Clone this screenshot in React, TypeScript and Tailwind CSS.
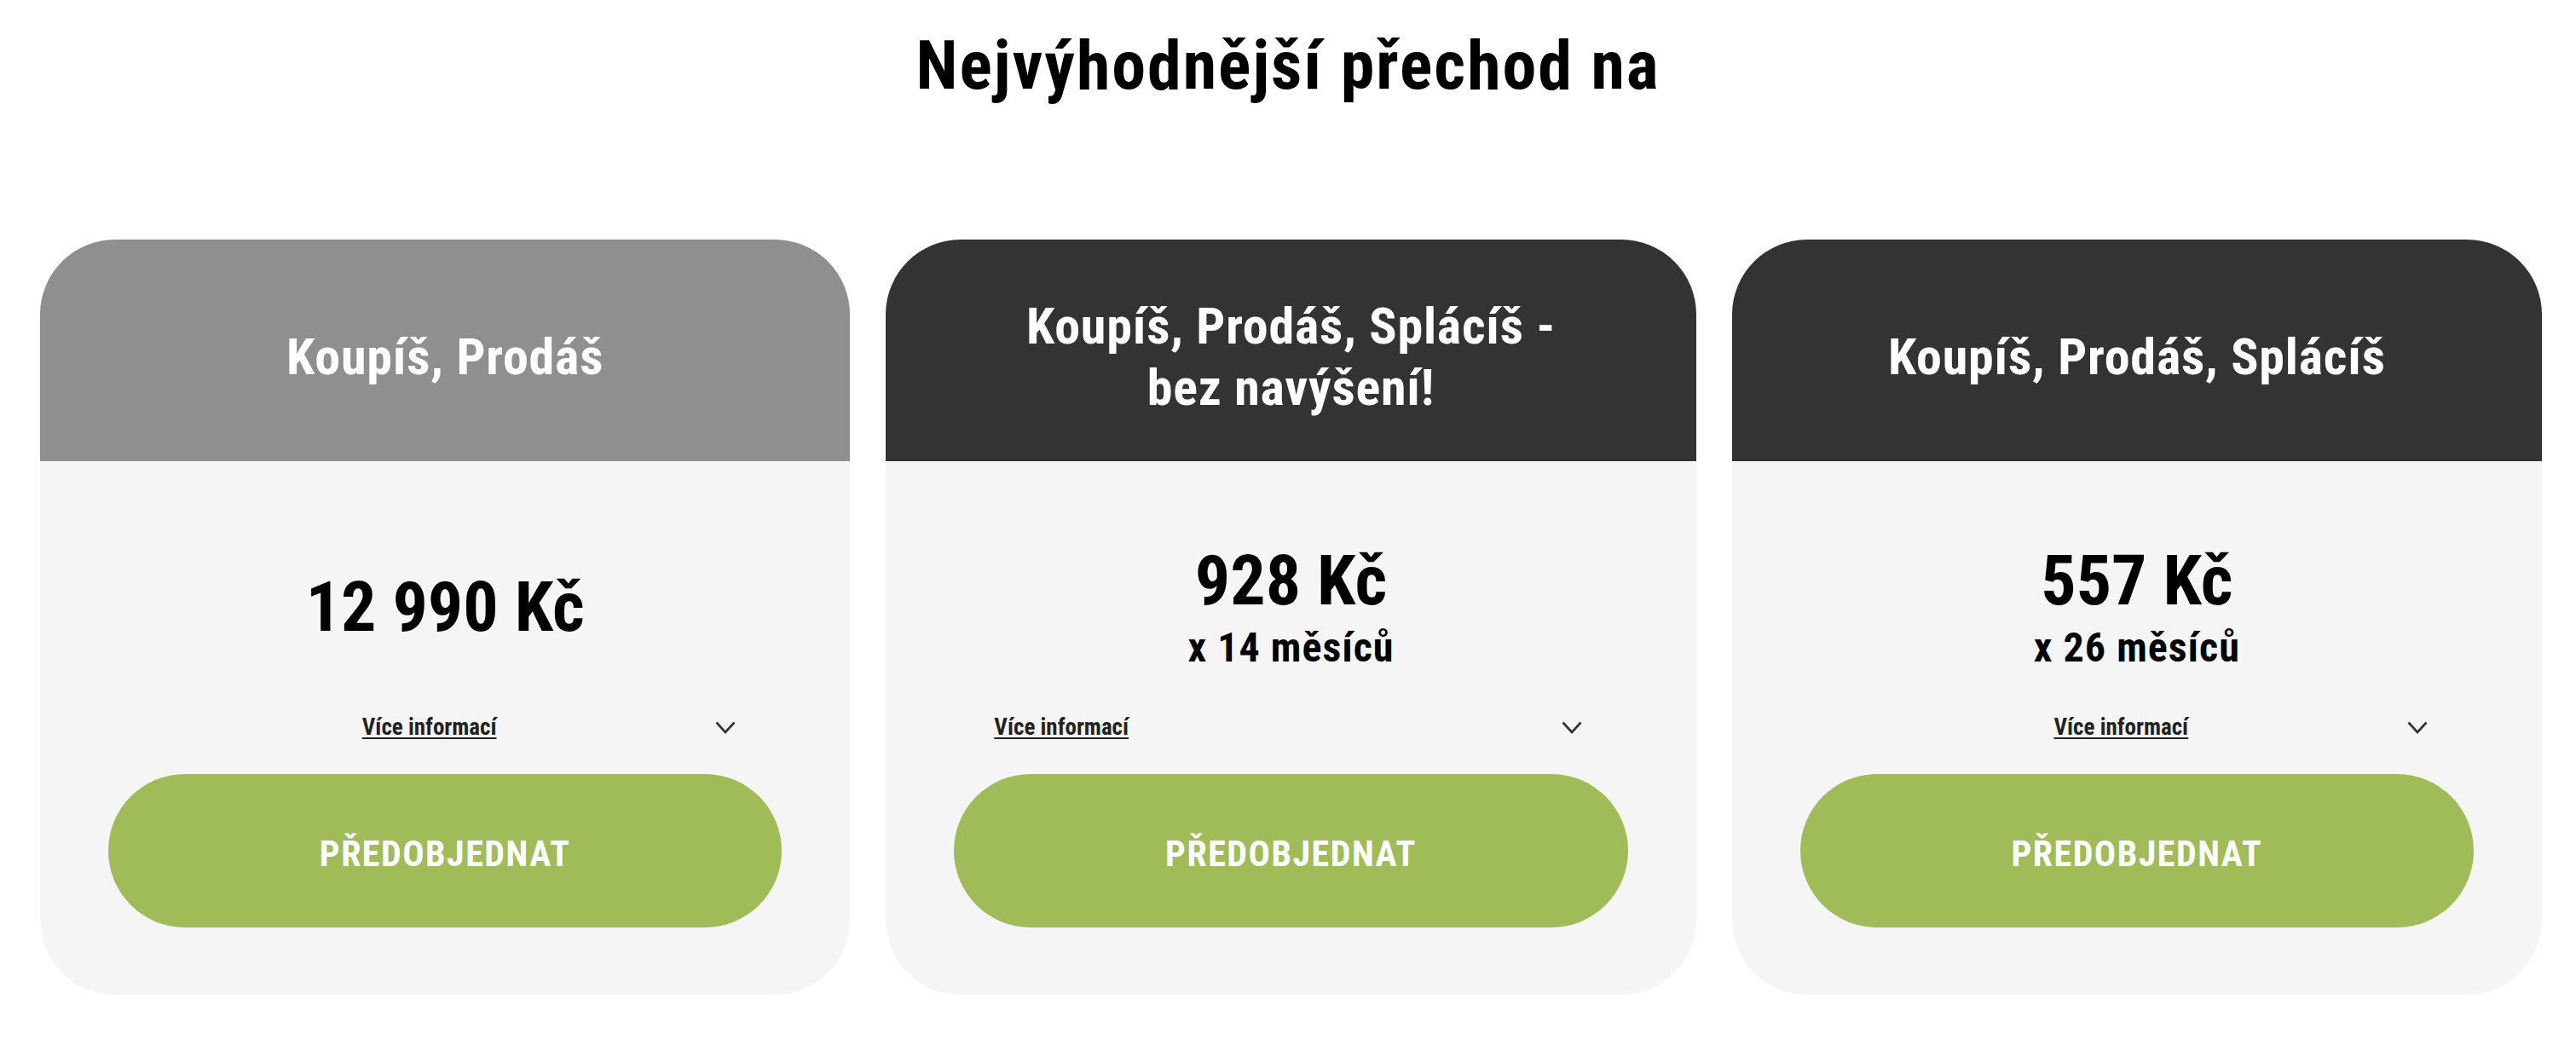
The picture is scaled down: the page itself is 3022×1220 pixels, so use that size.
import React from 'react';

interface Plan {
  title: string[];
  headerBg: string;
  price: string;
  months?: string;
  linkAlign: 'center' | 'start';
}

const PLANS: Plan[] = [
  {
    title: ['Koupíš, Prodáš'],
    headerBg: 'bg-[#8f8f8f]',
    price: '12 990 Kč',
    linkAlign: 'center',
  },
  {
    title: ['Koupíš, Prodáš, Splácíš -', 'bez navýšení!'],
    headerBg: 'bg-[#333333]',
    price: '928 Kč',
    months: 'x 14 měsíců',
    linkAlign: 'start',
  },
  {
    title: ['Koupíš, Prodáš, Splácíš'],
    headerBg: 'bg-[#333333]',
    price: '557 Kč',
    months: 'x 26 měsíců',
    linkAlign: 'center',
  },
];

function Chevron() {
  return (
    <svg width="24" height="15" viewBox="0 0 24 15" fill="none" className="absolute right-[17px] top-[8px]">
      <path d="M1.5 1.5 L12 13 L22.5 1.5" stroke="#333333" strokeWidth="2.6" />
    </svg>
  );
}

function PlanCard({ plan }: { plan: Plan }) {
  return (
    <div className="flex flex-col rounded-[88px] overflow-hidden bg-[#f5f5f5]">
      <div
        className={`h-[260px] pt-[16px] flex flex-col items-center justify-center text-white text-[60px] leading-[72px] font-bold tracking-[0.8px] text-center ${plan.headerBg}`}
      >
        {plan.title.map((line) => (
          <span key={line}>{line}</span>
        ))}
      </div>

      <div className="h-[297px] pt-[45px] flex flex-col items-center justify-center text-black">
        <div className="text-[82px] leading-none font-bold">{plan.price}</div>
        {plan.months && (
          <div className="mt-[14px] text-[48px] leading-none font-bold tracking-[1px]">{plan.months}</div>
        )}
      </div>

      <div
        className={`relative h-[30px] ml-[80px] mr-[117px] flex items-center ${
          plan.linkAlign === 'center' ? 'justify-center' : 'justify-start pl-[47px]'
        }`}
      >
        <a className="text-[27px] leading-none font-bold text-[#222222] underline decoration-2 underline-offset-[3px]">
          Více informací
        </a>
        <Chevron />
      </div>

      <button
        type="button"
        className="mt-[40px] mb-[79px] mx-[80px] h-[180px] pt-[8px] rounded-full bg-[#a0bc58] text-white text-[42px] leading-none font-bold tracking-[1.5px]"
      >
        PŘEDOBJEDNAT
      </button>
    </div>
  );
}

export default function App() {
  return (
    <div
      className="min-h-screen bg-white font-stretch-condensed"
      style={{ fontFamily: 'Roboto, "Liberation Sans", sans-serif' }}
    >
      <h1 className="pt-[37px] text-center text-[80px] leading-none font-bold tracking-[2px] text-black">
        Nejvýhodnější přechod na
      </h1>
      <div className="mt-[164px] pl-[47px] pr-[40px] grid grid-cols-3 gap-[42px]">
        {PLANS.map((p) => (
          <PlanCard key={p.price} plan={p} />
        ))}
      </div>
    </div>
  );
}
